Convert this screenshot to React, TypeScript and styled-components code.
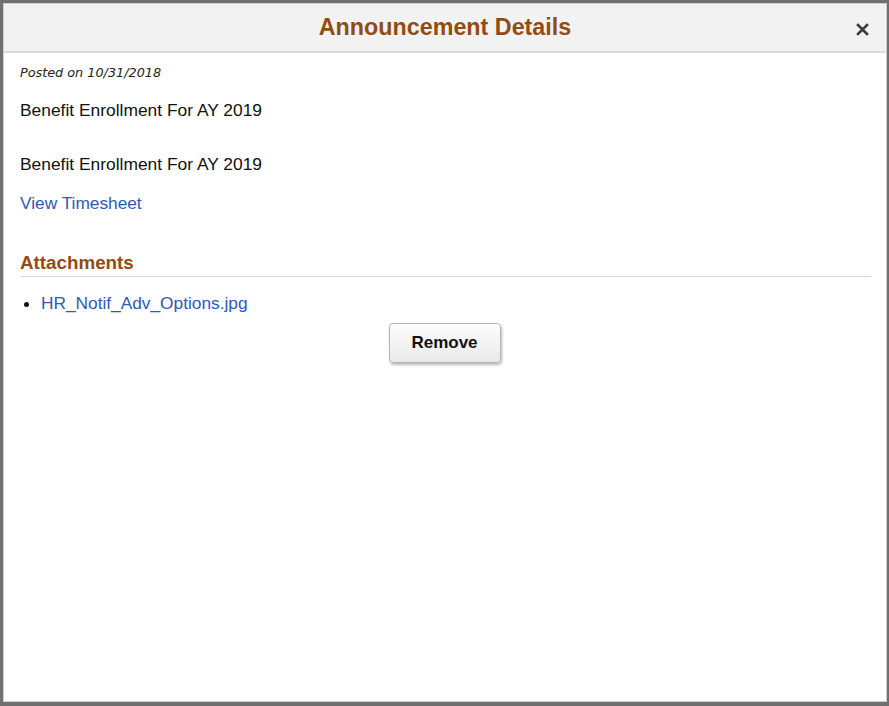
import * as React from "react";
import styled, { createGlobalStyle } from "styled-components";

const GlobalStyle = createGlobalStyle`
  html, body {
    margin: 0;
    padding: 0;
    height: 100%;
    background: #6f6f6f;
  }
  #root {
    height: 100%;
  }
`;

const Frame = styled.div`
  box-sizing: border-box;
  width: 889px;
  height: 706px;
  padding: 3px 2px 4px 3px;
  background: #707070;
`;

const Dialog = styled.div`
  box-sizing: border-box;
  height: 100%;
  background: #ffffff;
  border: 1px solid #cfcfcf;
  display: flex;
  flex-direction: column;
  font-family: "Liberation Sans", Arial, sans-serif;
`;

const Header = styled.div`
  position: relative;
  height: 47px;
  background: #f2f2f2;
  border-bottom: 2px solid #dcdcdc;
  display: flex;
  align-items: center;
  justify-content: center;
`;

const Title = styled.h1`
  margin: 0;
  font-size: 23.3px;
  font-weight: bold;
  color: #924c12;
`;

const Close = styled.button`
  position: absolute;
  right: 14px;
  top: 15px;
  width: 20px;
  height: 20px;
  padding: 0;
  border: 0;
  background: transparent;
  display: flex;
  align-items: center;
  justify-content: center;
`;

const Body = styled.div`
  padding: 13px 15px 0 16px;
  display: flex;
  flex-direction: column;
`;

const Posted = styled.div`
  font-family: "DejaVu Sans", Verdana, sans-serif;
  font-style: italic;
  font-size: 12.8px;
  color: #222;
  line-height: 14px;
`;

const Text = styled.p<{ $top: number }>`
  margin: ${(p) => p.$top}px 0 0;
  font-size: 17.4px;
  line-height: 20px;
  color: #111;
`;

const Link = styled.a<{ $top?: number }>`
  margin-top: ${(p) => p.$top ?? 0}px;
  font-size: 17.3px;
  line-height: 20px;
  color: #2c5bb5;
  text-decoration: none;
  cursor: pointer;
`;

const SectionTitle = styled.h2`
  margin: 39px 0 0;
  padding-bottom: 2px;
  font-size: 18.8px;
  line-height: 22px;
  font-weight: bold;
  color: #924c12;
  border-bottom: 1px solid #d6d6d6;
`;

const List = styled.ul`
  margin: 16px 0 0;
  padding: 0;
  list-style: none;
`;

const Item = styled.li`
  display: flex;
  align-items: center;
  gap: 12px;
  padding-left: 4px;
  line-height: 20px;
`;

const Dot = styled.span`
  width: 5px;
  height: 5px;
  border-radius: 50%;
  background: #111;
  margin-top: 3px;
`;

const ButtonRow = styled.div`
  display: flex;
  justify-content: center;
  margin-top: 10px;
  padding-right: 2px;
`;

const Button = styled.button`
  box-sizing: border-box;
  width: 112px;
  height: 40px;
  border: 1px solid #b4b4b4;
  border-radius: 4px;
  background: linear-gradient(#fdfdfd, #e9e9e9);
  box-shadow: 1px 2px 3px rgba(0, 0, 0, 0.28);
  font-family: "Liberation Sans", Arial, sans-serif;
  font-size: 17px;
  font-weight: bold;
  color: #111;
  cursor: pointer;
`;

export default function App() {
  return (
    <>
      <GlobalStyle />
      <Frame>
        <Dialog>
          <Header>
            <Title>Announcement Details</Title>
            <Close aria-label="Close">
              <svg width="13" height="13" viewBox="0 0 13 13">
                <path
                  d="M2 2 L11 11 M11 2 L2 11"
                  stroke="#3a3a3a"
                  strokeWidth="2.6"
                  strokeLinecap="square"
                />
              </svg>
            </Close>
          </Header>
          <Body>
            <Posted>Posted on 10/31/2018</Posted>
            <Text $top={20}>Benefit Enrollment For AY 2019</Text>
            <Text $top={34}>Benefit Enrollment For AY 2019</Text>
            <Link $top={19}>View Timesheet</Link>
            <SectionTitle>Attachments</SectionTitle>
            <List>
              <Item>
                <Dot />
                <Link>HR_Notif_Adv_Options.jpg</Link>
              </Item>
            </List>
            <ButtonRow>
              <Button>Remove</Button>
            </ButtonRow>
          </Body>
        </Dialog>
      </Frame>
    </>
  );
}
